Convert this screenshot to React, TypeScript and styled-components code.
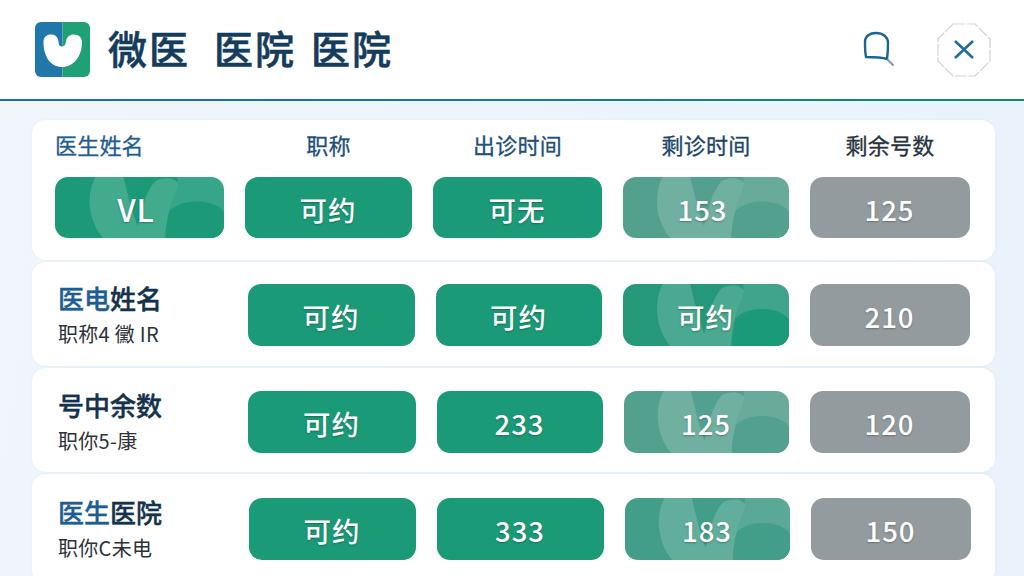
import styled, { createGlobalStyle } from 'styled-components'

const GlobalStyle = createGlobalStyle`
  html, body {
    margin: 0;
    padding: 0;
    background: #ebf3fb;
    font-family: "Noto Sans CJK SC", "Noto Sans", sans-serif;
  }
`

const Page = styled.div`
  width: 1024px;
  height: 576px;
  overflow: hidden;
  background: linear-gradient(100deg, #f0f6fb, #e9f2fb);
`

const Header = styled.header`
  height: 99px;
  padding: 0 33px 0 35px;
  display: flex;
  align-items: center;
  justify-content: space-between;
  box-sizing: border-box;
  background: #fff;
`

const Brand = styled.div`
  display: flex;
  align-items: center;
  gap: 18px;
`

const Title = styled.h1`
  margin: 0 0 6px;
  display: flex;
  font-size: 39px;
  line-height: 50px;
  font-weight: 500;
  color: #153c5b;
  white-space: nowrap;
  -webkit-text-stroke: 0.6px #153c5b;
`

const TitleWord = styled.span<{ $gap: number }>`
  margin-left: ${p => p.$gap}px;
  letter-spacing: 2px;
`

const Tools = styled.div`
  display: flex;
  align-items: center;
  gap: 40px;
`

const Rule = styled.div`
  height: 2px;
  background: linear-gradient(90deg, #1b6dac, #1b74a4 45%, #0f8c62 80%);
`

const List = styled.main`
  padding: 19px 29px 0 32px;
  display: flex;
  flex-direction: column;
  gap: 2px;
`

const Card = styled.section<{ $height: number }>`
  height: ${p => p.$height}px;
  flex: none;
  box-sizing: border-box;
  background: #fff;
  border-radius: 14px;
  box-shadow: 0 0 2px rgba(190, 205, 220, 0.3);
`

const HeadCard = styled(Card)`
  padding: 11px 0 0 23px;
`

const Grid = styled.div<{ $cols: string }>`
  display: grid;
  grid-template-columns: ${p => p.$cols};
  column-gap: 21px;
`

const HeadRow = styled(Grid)`
  margin-bottom: 20px;
`

const HeadCell = styled.div<{ $align: 'left' | 'center'; $color: string }>`
  font-size: 22px;
  line-height: 26px;
  letter-spacing: 0.2px;
  text-align: ${p => p.$align};
  color: ${p => p.$color};
  -webkit-text-stroke: 0.3px ${p => p.$color};
`

const RowCard = styled(Card)<{ $top: number }>`
  padding: ${p => p.$top}px 0 0 26px;
`

const Row = styled(Grid)`
  align-items: start;
`

const NameBlock = styled.div`
  margin-top: -3px;
  display: flex;
  flex-direction: column;
  gap: 7px;
  white-space: nowrap;
`

const Name = styled.div`
  font-size: 26px;
  line-height: 34px;
  font-weight: 500;
  color: #14324c;
  -webkit-text-stroke: 0.4px #14324c;
`

const NameAccent = styled.span`
  color: #1c5e93;
  -webkit-text-stroke: 0.4px #1c5e93;
`

const Sub = styled.div`
  font-size: 20px;
  line-height: 24px;
  letter-spacing: 0.3px;
  color: #2c3238;
`

type Tone = 'solid' | 'soft' | 'bright' | 'fade' | 'mid' | 'gray'

const toneColor: Record<Tone, string> = {
  solid: '#1b9a77',
  soft: '#1c9a78',
  bright: '#26987a',
  fade: '#54a08e',
  mid: '#429e88',
  gray: '#939b9e',
}

const Pill = styled.div<{ $tone: Tone; $height: number }>`
  position: relative;
  height: ${p => p.$height}px;
  padding: 2px 1px 0 0;
  box-sizing: border-box;
  overflow: hidden;
  display: flex;
  align-items: center;
  justify-content: center;
  border-radius: 13px;
  background: ${p => toneColor[p.$tone]};
  color: #fff;
  font-size: 27.5px;
  font-weight: 500;
  letter-spacing: 1px;
  text-shadow: 0 1px 2px rgba(0, 0, 0, 0.28);
`

const PillText = styled.span<{ $nudge: number; $size: number }>`
  position: relative;
  margin-right: ${p => p.$nudge}px;
  font-size: ${p => p.$size}px;
`

const PillArt = styled.svg`
  position: absolute;
  inset: 0;
  width: 100%;
  height: 100%;
`

const Glow = ({ tone }: { tone: Tone }) => (
  <PillArt viewBox="0 0 168 62" preserveAspectRatio="none" aria-hidden="true">
    <path
      d="M40 0H68C72 16 76 34 82 50C86 34 90 14 100 4C108 0 118 0 122 6C120 20 110 35 110 62H48C34 46 30 20 40 0Z"
      fill="#fff"
      fillOpacity="0.17"
    />
    <path d="M122 0H168V36C155 24 130 20 114 34C118 20 122 10 122 0Z" fill="#fff" fillOpacity="0.12" />
    <path
      d="M110 62C108 40 125 24 145 25C155 26 165 30 168 36V62Z"
      fill={tone === 'bright' ? toneColor.solid : toneColor[tone]}
    />
  </PillArt>
)

type CellData = { text: string; tone: Tone; nudge?: number; size?: number; height?: number }

const Cell = ({ text, tone, nudge = 0, size = 27.5, height = 62 }: CellData) => (
  <Pill $tone={tone} $height={height}>
    {tone !== 'solid' && tone !== 'gray' && <Glow tone={tone} />}
    <PillText $nudge={nudge} $size={size}>
      {text}
    </PillText>
  </Pill>
)

const Logo = () => (
  <svg width="55" height="55" viewBox="0 0 55 55" aria-hidden="true">
    <defs>
      <clipPath id="logo-clip">
        <rect width="55" height="55" rx="6" />
      </clipPath>
    </defs>
    <g clipPath="url(#logo-clip)">
      <rect width="27.5" height="55" fill="#1f78a9" />
      <rect x="27.5" width="27.5" height="55" fill="#1fa077" />
    </g>
    <path
      d="M8.5 20C8.5 14 13 12 17 12.5C21 13 23.5 16 23.5 20L24 23Q27 26 30 23L31 20C31 16 34 13 38 12.5C43 12 47 15 47 20C47 35 38 45 27 45C16 45 8.5 35 8.5 20Z"
      fill="#fff"
    />
  </svg>
)

const SearchIcon = () => (
  <svg width="36" height="40" viewBox="0 0 36 40" fill="none" aria-hidden="true">
    <path
      d="M4 12C4 6 9 3 15 3C22 3 27 7 27 13C27 18 27 22 26 29C20 27 12 27 5 27C4 22 4 17 4 12Z"
      stroke="#1a668f"
      strokeWidth="2.4"
      strokeLinejoin="round"
    />
    <path d="M27 30L32 35" stroke="#8b9aa3" strokeWidth="2.2" strokeLinecap="round" />
  </svg>
)

const CloseIcon = () => (
  <svg width="54" height="54" viewBox="0 0 54 54" fill="none" aria-hidden="true">
    <path
      d="M16 1H38L53 16V38L38 53H16L1 38V16Z"
      stroke="#cfd3d5"
      strokeWidth="1.2"
      strokeDasharray="12 1.5"
    />
    <path d="M18 18L36 35M36 18L18 35" stroke="#1f6d98" strokeWidth="2.6" />
  </svg>
)

const heads: { label: string; color: string }[] = [
  { label: '医生姓名', color: '#1f5c92' },
  { label: '职称', color: '#1d4f7a' },
  { label: '出诊时间', color: '#1d4f7a' },
  { label: '剩诊时间', color: '#1b466b' },
  { label: '剩余号数', color: '#26333d' },
]

const headCols = '169px 167px 169px 166px 160px'

const headCells: CellData[] = [
  { text: 'VL', tone: 'soft', nudge: 6, size: 31, height: 61 },
  { text: '可约', tone: 'solid', height: 61 },
  { text: '可无', tone: 'solid', height: 61 },
  { text: '153', tone: 'fade', nudge: 6, height: 61 },
  { text: '125', tone: 'gray', height: 61 },
]

const rows: {
  accent: string
  name: string
  sub: string
  cols: string
  height: number
  top: number
  cells: CellData[]
}[] = [
  {
    accent: '医电',
    name: '姓名',
    sub: '职称4 黴 IR',
    cols: '169px 167px 166px 166px 160px',
    height: 104,
    top: 22,
    cells: [
      { text: '可约', tone: 'solid' },
      { text: '可约', tone: 'solid' },
      { text: '可约', tone: 'bright' },
      { text: '210', tone: 'gray' },
    ],
  },
  {
    accent: '',
    name: '号中余数',
    sub: '职你5-康',
    cols: '169px 168px 166px 165px 160px',
    height: 104,
    top: 23,
    cells: [
      { text: '可约', tone: 'solid' },
      { text: '233', tone: 'solid' },
      { text: '125', tone: 'fade' },
      { text: '120', tone: 'gray' },
    ],
  },
  {
    accent: '医生',
    name: '医院',
    sub: '职你C未电',
    cols: '170px 167px 167px 165px 160px',
    height: 110,
    top: 24,
    cells: [
      { text: '可约', tone: 'solid' },
      { text: '333', tone: 'solid' },
      { text: '183', tone: 'mid' },
      { text: '150', tone: 'gray' },
    ],
  },
]

const App = () => {
  return (
    <Page>
      <GlobalStyle />
      <Header>
        <Brand>
          <Logo />
          <Title>
            <TitleWord $gap={0}>微医</TitleWord>
            <TitleWord $gap={24}>医院</TitleWord>
            <TitleWord $gap={15}>医院</TitleWord>
          </Title>
        </Brand>
        <Tools>
          <SearchIcon />
          <CloseIcon />
        </Tools>
      </Header>
      <Rule />
      <List>
        <HeadCard $height={140}>
          <HeadRow $cols={headCols}>
            {heads.map((h, i) => (
              <HeadCell key={h.label} $align={i === 0 ? 'left' : 'center'} $color={h.color}>
                {h.label}
              </HeadCell>
            ))}
          </HeadRow>
          <Grid $cols={headCols}>
            {headCells.map((c, i) => (
              <Cell key={i} {...c} />
            ))}
          </Grid>
        </HeadCard>
        {rows.map(r => (
          <RowCard key={r.sub} $height={r.height} $top={r.top}>
            <Row $cols={r.cols}>
              <NameBlock>
                <Name>
                  <NameAccent>{r.accent}</NameAccent>
                  {r.name}
                </Name>
                <Sub>{r.sub}</Sub>
              </NameBlock>
              {r.cells.map((c, i) => (
                <Cell key={i} {...c} />
              ))}
            </Row>
          </RowCard>
        ))}
      </List>
    </Page>
  )
}

export default App
